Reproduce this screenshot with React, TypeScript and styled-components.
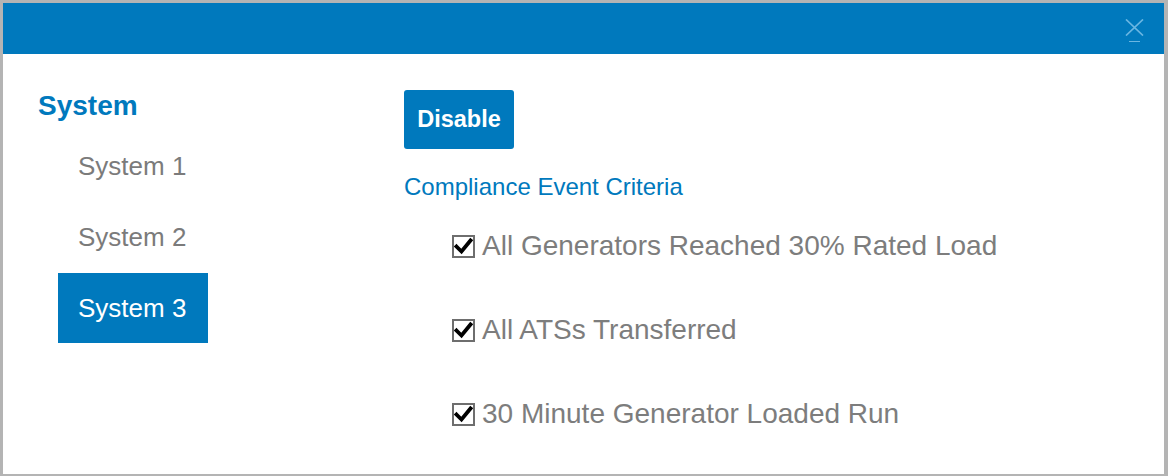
import React from "react";
import styled, { createGlobalStyle } from "styled-components";

const BLUE = "#0079bd";

const GlobalStyle = createGlobalStyle`
  html, body {
    margin: 0;
    padding: 0;
    background: #b4b4b4;
    font-family: "Liberation Sans", Arial, sans-serif;
  }
  * { box-sizing: border-box; }
`;

const Modal = styled.div`
  margin: 3px 4px 2px 3px;
  height: 471px;
  background: #ffffff;
  display: flex;
  flex-direction: column;
`;

const Header = styled.div`
  height: 51px;
  background: ${BLUE};
  display: flex;
  justify-content: flex-end;
  align-items: flex-start;
  padding: 16px 20px 0 0;
`;

const CloseButton = styled.button`
  width: 20px;
  padding: 0;
  border: none;
  background: transparent;
  display: flex;
  flex-direction: column;
  align-items: center;
  gap: 5px;
  cursor: pointer;
`;

const FocusLine = styled.span`
  display: block;
  width: 11px;
  height: 1px;
  background: #6ab6e2;
`;

const Body = styled.div`
  flex: 1;
  display: flex;
`;

const Sidebar = styled.nav`
  width: 401px;
  padding: 34px 0 0 35px;
`;

const SidebarHeading = styled.h2`
  margin: 0 0 7px;
  font-size: 28px;
  line-height: 36px;
  font-weight: bold;
  color: ${BLUE};
`;

const NavList = styled.ul`
  list-style: none;
  margin: 0 0 0 20px;
  padding: 0;
  display: flex;
  flex-direction: column;
  gap: 1px;
`;

const NavItem = styled.li<{ $active?: boolean }>`
  width: 150px;
  height: 70px;
  padding-left: 20px;
  font-size: 26px;
  line-height: 70px;
  color: ${(p) => (p.$active ? "#ffffff" : "#7b7b7b")};
  background: ${(p) => (p.$active ? BLUE : "transparent")};
`;

const Main = styled.section`
  flex: 1;
  padding-top: 36px;
`;

const DisableButton = styled.button`
  width: 110px;
  height: 59px;
  border: none;
  border-radius: 3px;
  background: ${BLUE};
  color: #ffffff;
  font-family: "Liberation Sans", Arial, sans-serif;
  font-size: 23.5px;
  font-weight: bold;
  padding: 0;
`;

const SectionTitle = styled.h3`
  margin: 23px 0 0;
  font-size: 24px;
  line-height: 30px;
  font-weight: normal;
  color: ${BLUE};
`;

const CriteriaList = styled.ul`
  list-style: none;
  margin: 2px 0 0 48px;
  padding: 0;
`;

const CriteriaRow = styled.li`
  height: 84px;
  display: flex;
  align-items: center;
  gap: 7px;
`;

const CheckBox = styled.span`
  width: 23px;
  height: 23px;
  border: 2px solid #6e6e6e;
  background: #fff;
  display: flex;
  align-items: center;
  justify-content: center;
  flex: none;
`;

const CriteriaLabel = styled.span`
  font-size: 28px;
  color: #7d7d7d;
`;

const Check = () => (
  <svg width="19" height="19" viewBox="0 0 19 19">
    <path d="M2.5 9.5 L7.5 14.5 L16.5 3.5" fill="none" stroke="#000" strokeWidth="3.8" strokeLinecap="square" strokeLinejoin="miter" />
  </svg>
);

const CloseIcon = () => (
  <svg width="19" height="17" viewBox="0 0 19 17">
    <path d="M1 0.5 L18 16.5 M18 0.5 L1 16.5" stroke="#6ab6e2" strokeWidth="1.7" fill="none" />
  </svg>
);

const systems = ["System 1", "System 2", "System 3"];
const criteria = [
  "All Generators Reached 30% Rated Load",
  "All ATSs Transferred",
  "30 Minute Generator Loaded Run",
];

export default function App() {
  return (
    <>
      <GlobalStyle />
      <Modal>
        <Header>
          <CloseButton aria-label="Close">
            <CloseIcon />
            <FocusLine />
          </CloseButton>
        </Header>
        <Body>
          <Sidebar>
            <SidebarHeading>System</SidebarHeading>
            <NavList>
              {systems.map((s, i) => (
                <NavItem key={s} $active={i === 2}>
                  {s}
                </NavItem>
              ))}
            </NavList>
          </Sidebar>
          <Main>
            <DisableButton>Disable</DisableButton>
            <SectionTitle>Compliance Event Criteria</SectionTitle>
            <CriteriaList>
              {criteria.map((c) => (
                <CriteriaRow key={c}>
                  <CheckBox>
                    <Check />
                  </CheckBox>
                  <CriteriaLabel>{c}</CriteriaLabel>
                </CriteriaRow>
              ))}
            </CriteriaList>
          </Main>
        </Body>
      </Modal>
    </>
  );
}
